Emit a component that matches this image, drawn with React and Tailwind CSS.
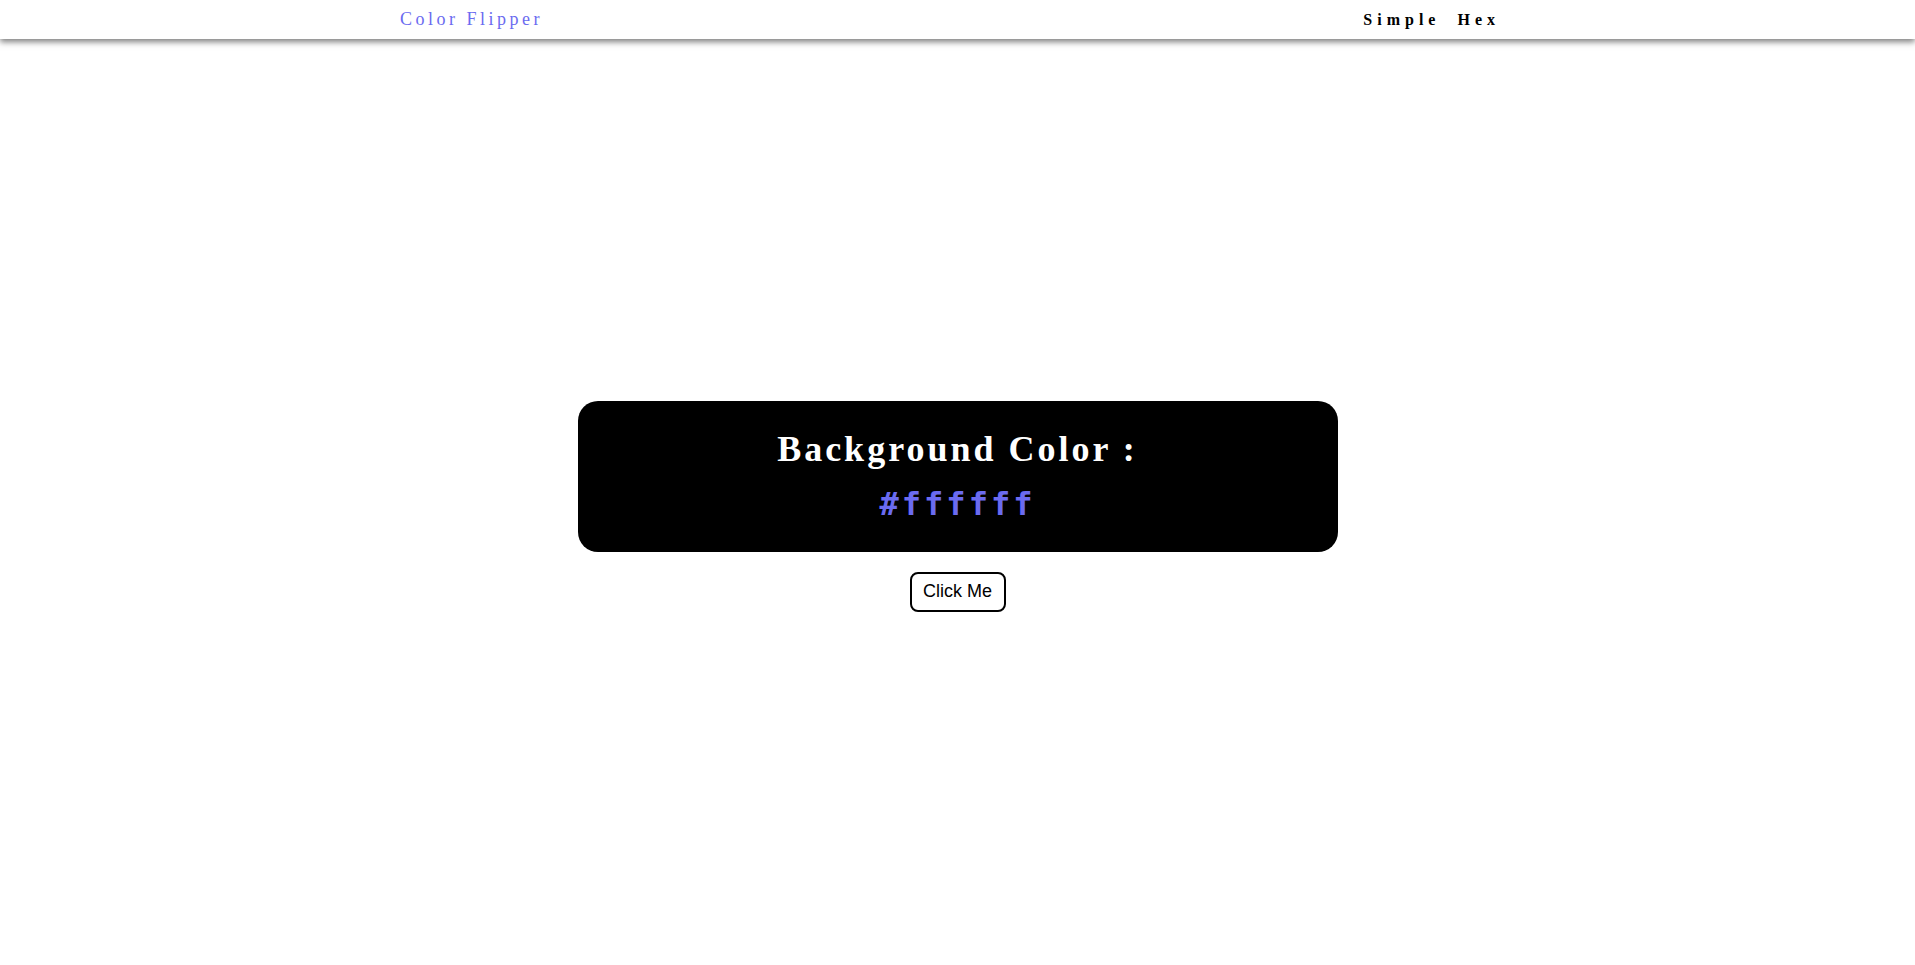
import { useState } from "react";

const hexChars = ["0", "1", "2", "3", "4", "5", "6", "7", "8", "9", "a", "b", "c", "d", "e", "f"];

const randomHex = () => {
  let out = "#";
  for (let i = 0; i < 6; i++) {
    out += hexChars[Math.floor(Math.random() * 16)];
  }
  return out;
};

const App = () => {
  const [color, setColor] = useState("#ffffff");

  return (
    <div className="min-h-screen bg-white" style={{ backgroundColor: color }}>
      {/* Navbar */}
      <nav className="h-[39px] bg-white shadow-[0_3px_6px_rgba(0,0,0,0.5)]">
        <div className="w-[1115px] mx-auto pr-[15px] h-full flex items-center justify-between font-['Liberation_Serif',serif]">
          <h4 className="text-[18px] tracking-[3.5px] text-[#6b6bf0]">Color Flipper</h4>
          <ul className="flex items-center gap-[17px] text-[16px] font-bold tracking-[5px] text-black">
            <li>Simple</li>
            <li>Hex</li>
          </ul>
        </div>
      </nav>

      {/* Main */}
      <main className="h-[926px] pt-[8px] flex flex-col items-center justify-center">
        <div className="w-[760px] h-[151px] pt-[30px] bg-black rounded-[20px] flex flex-col items-center">
          <h2 className="font-['Liberation_Serif',serif] font-bold text-[36px] leading-none tracking-[3px] text-white">
            Background Color :
          </h2>
          <span className="font-['DejaVu_Sans_Mono',monospace] font-bold text-[32px] leading-none tracking-[3px] text-[#6b6bf0] mt-[21px]">
            {color}
          </span>
        </div>
        <button
          onClick={() => setColor(randomHex())}
          className="mt-[20px] w-[96px] h-[40px] border-2 border-black rounded-[8px] bg-white text-[18px] font-['Liberation_Sans',sans-serif] text-black"
        >
          Click Me
        </button>
      </main>
    </div>
  );
};

export default App;
